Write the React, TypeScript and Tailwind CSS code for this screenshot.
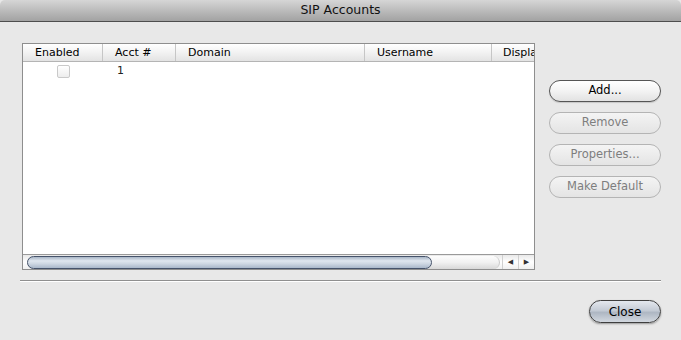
import React from "react";

const font = "font-['DejaVu_Sans',sans-serif]";

function AquaButton({ label, disabled }: { label: string; disabled?: boolean }) {
    return (
        <button
            className={`h-[22px] w-[112px] rounded-full border text-[11.5px] leading-none ${disabled
                ? "border-[#b4b4b4] text-[#7e7e7e] bg-gradient-to-b from-[#f4f4f4] to-[#e4e4e4]"
                : "border-[#555] text-black bg-gradient-to-b from-white via-[#f3f3f3] to-[#e2e2e2] shadow-[0_1px_1px_rgba(0,0,0,0.15)]"}`}
        >
            {label}
        </button>
    )
}

const columns = [
    { name: "Enabled", w: "w-[80px]" },
    { name: "Acct #", w: "w-[73px]" },
    { name: "Domain", w: "w-[189px]" },
    { name: "Username", w: "w-[127px]" },
    { name: "Displa", w: "w-[44px]" },
]

export default function App() {
    return (
        <div className={`w-[681px] h-[340px] bg-[#e8e8e8] flex flex-col overflow-hidden ${font}`}>
            {/* title bar */}
            <div className="h-[22px] shrink-0 rounded-t-[5px] bg-gradient-to-b from-[#d6d6d6] to-[#a2a2a2] border-b border-[#4e4e4e] flex items-center justify-center">
                <span className="text-[12.5px] text-[#111] leading-none">SIP Accounts</span>
            </div>

            <div className="flex pl-[22px] pt-[21px]">
                {/* table */}
                <div className="w-[513px] h-[227px] border border-[#8e8e8e] bg-white flex flex-col overflow-hidden">
                    <div className="h-[18px] shrink-0 flex border-b border-[#b4b4b4] bg-gradient-to-b from-white via-[#f2f2f2] to-[#e3e3e3] overflow-hidden">
                        {columns.map((c) => (
                            <div key={c.name} className={`${c.w} shrink-0 pl-3 border-r border-[#c6c6c6] last:border-r-0 last:pl-[11px] text-[11px] leading-[17px] text-black whitespace-nowrap overflow-hidden`}>
                                {c.name}
                            </div>
                        ))}
                    </div>
                    <div className="flex h-[18px] items-center">
                        <div className="w-[80px] flex justify-center pt-[1px]">
                            <div className="w-[13px] h-[13px] rounded-[2px] border border-[#c9c9c9] bg-gradient-to-b from-white to-[#ededed]" />
                        </div>
                        <div className="w-[73px] pl-[14px] text-[11px] text-[#222]">1</div>
                    </div>
                    <div className="flex-1" />
                    {/* horizontal scrollbar */}
                    <div className="h-[15px] shrink-0 border-t border-[#9a9a9a] flex items-center bg-gradient-to-b from-[#e9e9e9] via-white to-[#f0f0f0]">
                        <div className="flex-1 h-[13px] pl-[4px] pr-[2px] flex">
                            <div className="flex-1 rounded-full bg-gradient-to-b from-[#fdfdfd] via-[#f1f1f1] to-[#d8d8d8] border-r border-[#c8c8c8] flex">
                                <div className="w-[405px] h-full rounded-full border border-[#46536a] bg-[linear-gradient(to_bottom,#a8b5c6_0%,#e0e7ef_35%,#cfd8e3_60%,#aab8ca_100%)]" />
                            </div>
                        </div>
                        <div className="w-[16px] h-full border-l border-[#d0d0d0] flex items-center justify-center text-[7px] text-[#333]">◀</div>
                        <div className="w-[16px] h-full border-l border-[#d0d0d0] flex items-center justify-center text-[7px] text-[#333]">▶</div>
                    </div>
                </div>

                {/* side buttons */}
                <div className="ml-[14px] mt-[37px] flex flex-col gap-[10px]">
                    <AquaButton label="Add..." />
                    <AquaButton label="Remove" disabled />
                    <AquaButton label="Properties..." disabled />
                    <AquaButton label="Make Default" disabled />
                </div>
            </div>

            <div className="mx-[20px] mt-[10px] h-[2px] border-t border-[#8f8f8f] border-b-white border-b" />

            <div className="flex justify-end pr-[20px] mt-[18px]">
                <button className="h-[23px] w-[72px] rounded-full border border-[#3e3e3e] text-[12px] text-black bg-[linear-gradient(to_bottom,#e4e8ee_0%,#c4cbd5_45%,#aeb7c3_55%,#d2d8df_100%)] shadow-[0_1px_2px_rgba(0,0,0,0.35)]">
                    Close
                </button>
            </div>
        </div>
    )
}
